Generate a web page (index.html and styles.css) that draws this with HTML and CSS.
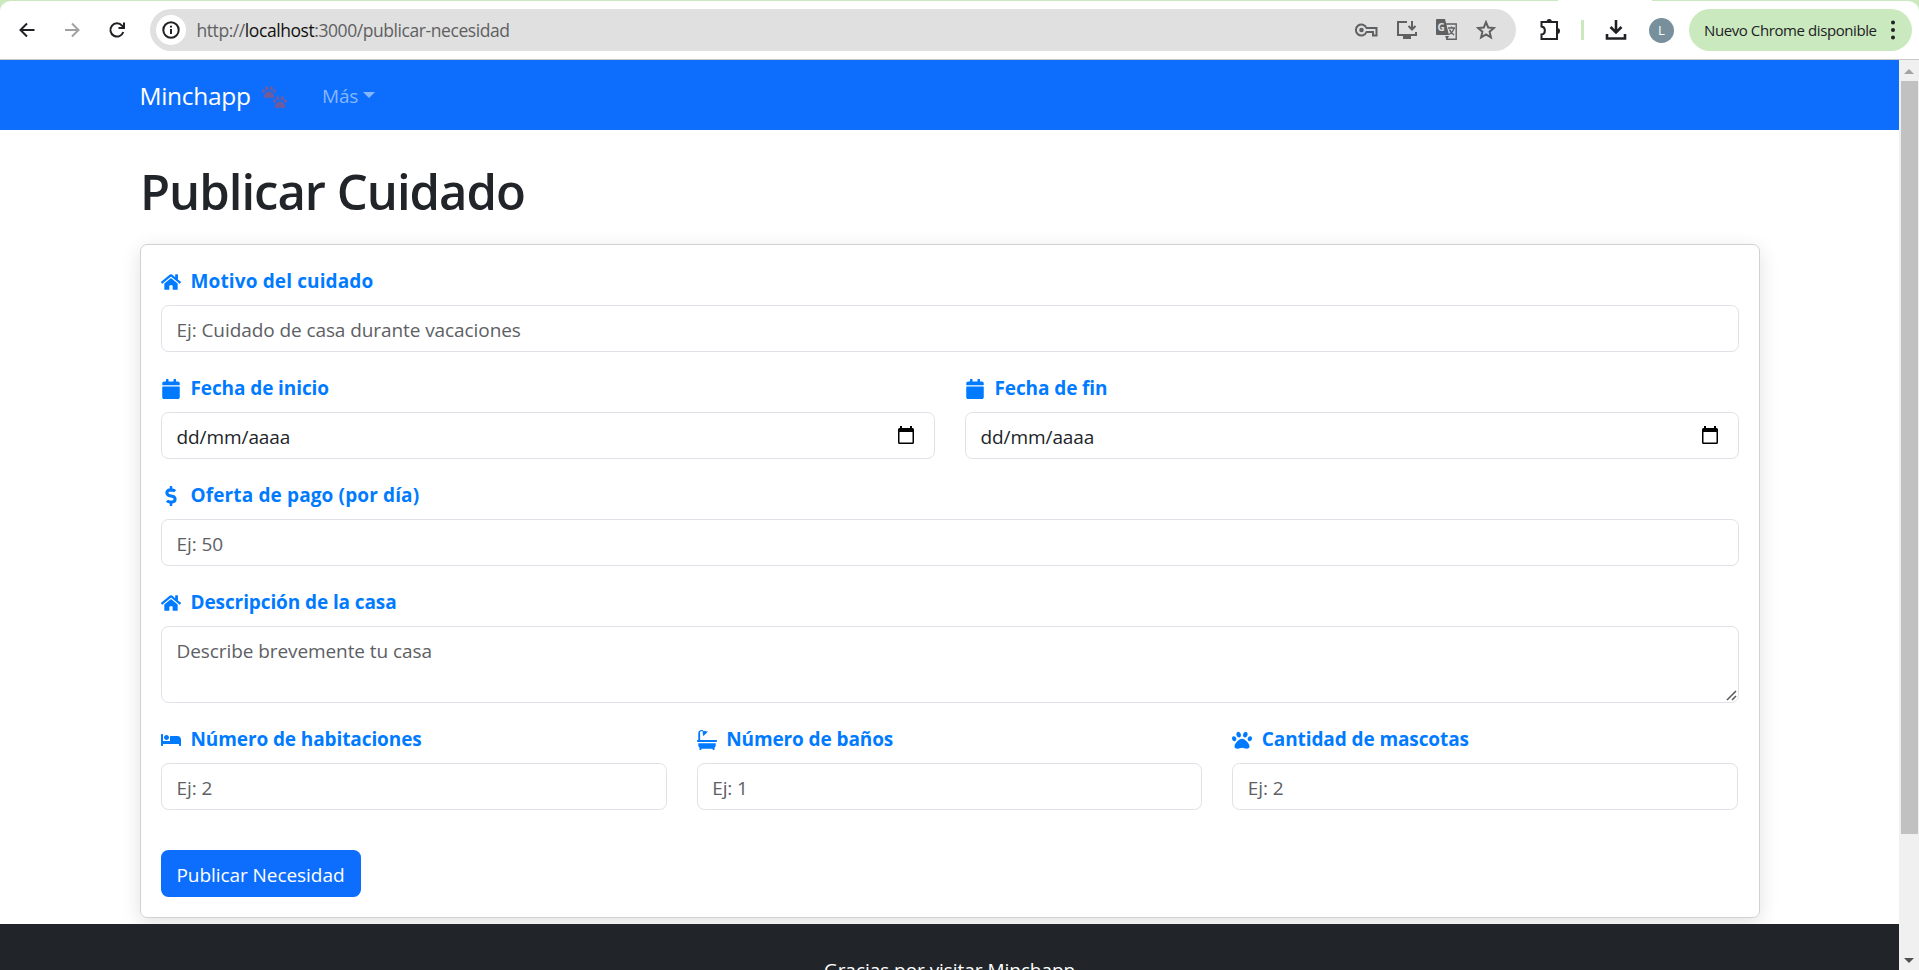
FILE: index.html
```html
<!DOCTYPE html>
<html lang="es">
<head>
<meta charset="utf-8">
<title>Publicar Cuidado - Minchapp</title>
<link rel="stylesheet" href="styles.css">
</head>
<body>
<svg class="defs" aria-hidden="true">
  <symbol id="house" viewBox="0 0 576 512"><path d="M280.37 148.26L96 300.11V464a16 16 0 0 0 16 16l112.06-.29a16 16 0 0 0 15.92-16V368a16 16 0 0 1 16-16h64a16 16 0 0 1 16 16v95.64a16 16 0 0 0 16 16.05L464 480a16 16 0 0 0 16-16V300L295.67 148.26a12.19 12.19 0 0 0-15.3 0zM571.6 251.47L488 182.56V44.05a12 12 0 0 0-12-12h-56a12 12 0 0 0-12 12v72.61L318.47 43a48 48 0 0 0-61 0L4.34 251.47a12 12 0 0 0-1.6 16.9l25.5 31A12 12 0 0 0 45.15 301l235.22-193.74a12.19 12.19 0 0 1 15.3 0L530.9 301a12 12 0 0 0 16.9-1.6l25.5-31a12 12 0 0 0-1.7-16.93z"/></symbol>
  <symbol id="calendar" viewBox="0 0 448 512"><path d="M12 192h424c6.600 0 12 5.400 12 12v260c0 26.500-21.500 48-48 48H48c-26.500 0-48-21.500-48-48V204c0-6.600 5.400-12 12-12zm436-44v-36c0-26.500-21.500-48-48-48h-48V12c0-6.600-5.400-12-12-12h-40c-6.600 0-12 5.400-12 12v52H160V12c0-6.600-5.400-12-12-12h-40c-6.600 0-12 5.400-12 12v52H48C21.500 64 0 85.500 0 112v36c0 6.600 5.400 12 12 12h424c6.600 0 12-5.400 12-12z"/></symbol>
  <symbol id="dollar" viewBox="0 0 288 512"><path d="M209.200 233.400l-108-31.600C88.700 198.200 80 186.500 80 173.500c0-16.300 13.200-29.500 29.500-29.500h66.300c12.200 0 24.200 3.700 34.200 10.500 6.100 4.100 14.300 3.100 19.500-2l34.800-34c7.100-6.900 6.100-18.400-1.800-24.500C238 74.800 207.400 64.100 176 64V16c0-8.800-7.200-16-16-16h-32c-8.800 0-16 7.200-16 16v48h-2.500C45.800 64-5.400 118.700.5 183.600c4.200 46.100 39.400 83.600 83.800 96.600l102.500 30c12.500 3.700 21.200 15.300 21.200 28.300 0 16.300-13.200 29.500-29.500 29.500h-66.300C100 368 88 364.300 78 357.500c-6.100-4.100-14.300-3.100-19.500 2l-34.800 34c-7.100 6.900-6.100 18.400 1.800 24.500 24.500 19.200 55.100 29.900 86.500 30v48c0 8.800 7.200 16 16 16h32c8.800 0 16-7.200 16-16v-48.200c46.600-.9 90.300-28.600 105.700-72.700 21.500-61.600-14.600-124.800-72.500-141.700z"/></symbol>
  <symbol id="bed" viewBox="0 0 640 512"><path d="M176 256c44.110 0 80-35.890 80-80s-35.890-80-80-80-80 35.890-80 80 35.890 80 80 80zm352-128H304c-8.840 0-16 7.160-16 16v144H64V80c0-8.840-7.160-16-16-16H16C7.160 64 0 71.160 0 80v352c0 8.840 7.160 16 16 16h32c8.840 0 16-7.160 16-16v-48h512v48c0 8.840 7.160 16 16 16h32c8.840 0 16-7.160 16-16V240c0-61.860-50.140-112-112-112z"/></symbol>
  <symbol id="bath" viewBox="0 0 512 512"><path d="M32 256V80a80 80 0 0 1 142-50c28-10 55-5 76 9l10-8 16 16-108 108-16-16 8-11c-16-24-18-52-9-76A32 32 0 0 0 80 80v176h416a16 16 0 0 1 16 16v16a16 16 0 0 1-16 16H16a16 16 0 0 1-16-16v-16a16 16 0 0 1 16-16zM32 336h448v48c0 28-12 54-32 71v41a16 16 0 0 1-16 16h-16a16 16 0 0 1-16-16v-16H112v16a16 16 0 0 1-16 16H80a16 16 0 0 1-16-16v-41a95 95 0 0 1-32-71z"/></symbol>
  <symbol id="paw" viewBox="0 0 512 512"><path d="M256 224c-79.410 0-192 122.760-192 200.250 0 34.900 26.810 55.750 71.740 55.750 48.840 0 81.090-25.080 120.260-25.080 39.510 0 71.850 25.080 120.260 25.080 44.930 0 71.740-20.850 71.740-55.750C448 346.760 335.410 224 256 224zm-147.280-12.610c-10.400-34.650-42.440-57.090-71.560-50.130-29.120 6.960-44.290 40.690-33.890 75.340 10.400 34.650 42.440 57.090 71.560 50.130 29.120-6.960 44.290-40.690 33.890-75.340zm84.720-20.780c30.940-8.140 42.930-46.420 30.060-85.490-12.860-39.070-45.750-65.050-76.690-56.900s-42.930 46.420-30.060 85.490c12.870 39.070 45.750 65.050 76.690 56.900zm281.390-29.350c-29.120-6.960-61.150 15.480-71.560 50.130-10.400 34.650 4.770 68.380 33.890 75.340 29.120 6.960 61.150-15.480 71.560-50.130 10.400-34.650-4.770-68.380-33.890-75.340zm-156.270 29.350c30.940 8.140 63.820-17.830 76.690-56.900 12.860-39.070.88-77.350-30.060-85.490s-63.820 17.830-76.690 56.900c-12.870 39.070-.88 77.350 30.060 85.490z"/></symbol>
  <symbol id="picker" viewBox="0 0 16 18"><path d="M2 0h2v2h8V0h2v2h.5A1.500 1.500 0 0 1 16 3.500v13a1.500 1.500 0 0 1-1.500 1.500h-13A1.500 1.500 0 0 1 0 16.500v-13A1.500 1.500 0 0 1 1.500 2H2zM1.500 6v10.500h13V6z"/></symbol>
</svg>

<header class="toolbar">
  <nav class="nav-buttons">
    <svg class="ic18" viewBox="0 0 18 18"><path class="ln2" d="M16.500 9H3M9 2.500 2.500 9 9 15.500"/></svg>
    <svg class="ic18 muted" viewBox="0 0 18 18"><path class="ln2" d="M2 9h13M9 2.500 15.500 9 9 15.500"/></svg>
    <svg class="ic18" viewBox="0 0 18 18"><path class="ln2" d="M15.300 11A6.600 6.600 0 1 1 14 4.600L16 7M16 1.500V7h-5.500"/></svg>
  </nav>
  <div class="address">
    <span class="info"><svg viewBox="0 0 18 18"><circle class="ln2" cx="9" cy="9" r="7.700"/><path class="ln2" d="M9 8v5M9 4.800v1.700"/></svg></span>
    <span class="url">http://<b>localhost</b>:3000/publicar-necesidad</span>
    <span class="address-icons">
      <svg width="24" height="20" viewBox="0 0 24 20"><path class="ln2" d="M12.500 8H22.500V15.500H19V12H12.500A5.500 5.500 0 1 1 12.500 8z"/><circle cx="7.500" cy="10" r="2.300"/></svg>
      <svg width="22" height="20" viewBox="0 0 22 20"><path class="ln2" d="M11 2H2v13h18v-3M16 1v8M12.500 6l3.500 3.500L19.500 6"/><path d="M7 15h8v4H7z"/></svg>
      <svg width="22" height="22" viewBox="0 0 22 22"><path class="ln1" d="M10 5h10.200v15.200H10"/><path d="M1 0h8l4 16H1a1 1 0 0 1-1-1V1a1 1 0 0 1 1-1zM9 17h4l-2 4z"/><text class="tr-g" x="1.500" y="12">G</text><path class="ln1" d="M12 9h7M15.500 7.500V9M18 9c-.5 3-2.500 5-5 6.500M13.500 10.500c1 2.500 2.500 4 4.500 5.500"/></svg>
      <svg width="20" height="20" viewBox="0 0 20 20"><path class="ln2" d="M10 2.200l2.200 5.300 5.700.5-4.300 3.700 1.300 5.600L10 14.300l-4.900 3 1.300-5.600L2.100 8l5.700-.5z"/></svg>
    </span>
  </div>
  <svg class="puzzle" viewBox="0 0 22 24"><path class="ln2" d="M2.500 4H18v17H2.500v-4.500c4.500-.5 4.500-7.500 0-8z"/><path d="M7.500 4a2.700 3 0 0 1 5.400 0zM18 10a3 3 0 0 1 0 6z"/></svg>
  <span class="divider"></span>
  <svg class="download" viewBox="0 0 22 22"><path class="ln3" d="M11 1v12M5.500 8l5.500 5.500L16.500 8M2 15v4.500h18V15"/></svg>
  <span class="avatar">L</span>
  <div class="update"><span>Nuevo Chrome disponible</span><svg width="6" height="20" viewBox="0 0 6 20"><circle cx="3" cy="2.500" r="2"/><circle cx="3" cy="10" r="2"/><circle cx="3" cy="17.500" r="2"/></svg></div>
  <span class="tab-foot"></span>
</header>

<div class="viewport">
  <div class="page">
    <nav class="navbar">
      <span class="brand">Minchapp</span>
      <span class="paws"><svg><use href="#paw"/></svg><svg><use href="#paw"/></svg></span>
      <span class="more">Más</span><span class="caret"></span>
    </nav>
    <main class="container">
      <h1>Publicar Cuidado</h1>
      <form class="card">
        <div class="field">
          <label class="wide"><svg><use href="#house"/></svg><span>Motivo del cuidado</span></label>
          <div class="control ph"><span>Ej: Cuidado de casa durante vacaciones</span></div>
        </div>
        <div class="row">
          <div class="field">
            <label><svg><use href="#calendar"/></svg><span>Fecha de inicio</span></label>
            <div class="control date"><span>dd/mm/aaaa</span><svg><use href="#picker"/></svg></div>
          </div>
          <div class="field">
            <label><svg><use href="#calendar"/></svg><span>Fecha de fin</span></label>
            <div class="control date"><span>dd/mm/aaaa</span><svg><use href="#picker"/></svg></div>
          </div>
        </div>
        <div class="field">
          <label class="wide"><svg><use href="#dollar"/></svg><span>Oferta de pago (por día)</span></label>
          <div class="control ph"><span>Ej: 50</span></div>
        </div>
        <div class="field">
          <label><svg><use href="#house"/></svg><span>Descripción de la casa</span></label>
          <div class="control ph area"><span>Describe brevemente tu casa</span><svg class="grip" viewBox="0 0 12 12"><path d="M1 11 10 2M6 11 10 7"/></svg></div>
        </div>
        <div class="row thirds">
          <div class="field">
            <label><svg><use href="#bed"/></svg><span>Número de habitaciones</span></label>
            <div class="control ph"><span>Ej: 2</span></div>
          </div>
          <div class="field">
            <label><svg><use href="#bath"/></svg><span>Número de baños</span></label>
            <div class="control ph"><span>Ej: 1</span></div>
          </div>
          <div class="field">
            <label><svg><use href="#paw"/></svg><span>Cantidad de mascotas</span></label>
            <div class="control ph"><span>Ej: 2</span></div>
          </div>
        </div>
        <button type="button" class="submit"><span>Publicar Necesidad</span></button>
      </form>
    </main>
    <footer class="footer"><span>Gracias por visitar Minchapp</span></footer>
  </div>
  <div class="scrollbar"><i class="up"></i><div class="thumb"></div><i class="down"></i></div>
</div>
</body>
</html>
```
FILE: styles.css
```css
* { box-sizing: border-box; }
body {
  margin: 0;
  width: 1919px;
  height: 970px;
  overflow: hidden;
  background: #cbe9be;
  color: #212529;
  font-family: "Open Sans", "Noto Sans", sans-serif;
  font-size: 19px;
}
svg { fill: currentColor; flex: none; display: block; }
.defs { position: absolute; width: 0; height: 0; }
.ln1, .ln2, .ln3 { fill: none; stroke: currentColor; stroke-width: 1.4; }
.ln2 { stroke-width: 2; }
.ln3 { stroke-width: 2.600; }

/* Browser toolbar */
.toolbar {
  position: relative;
  display: flex;
  align-items: center;
  height: 60px;
  border-top: 1px solid #cbe9be;
  border-bottom: 1px solid #c8c8c8;
  border-radius: 11px 11px 0 0;
  background: #fff;
  color: #202124;
}
.tab-foot { position: absolute; top: -1px; left: 1558px; width: 94px; height: 1px; background: #fff; }
.nav-buttons { display: flex; gap: 27px; padding-left: 18px; width: 150px; }
.ic18 { width: 18px; height: 18px; }
.muted { color: #a0a1a3; }
.address {
  display: flex;
  align-items: center;
  width: 1366px;
  height: 42px;
  padding: 0 20px 0 6px;
  border-radius: 21px;
  background: #e0e0e0;
  color: #5f6062;
}
.info {
  display: grid;
  place-items: center;
  width: 30px;
  height: 30px;
  border-radius: 50%;
  background: #fff;
  color: #202124;
}
.info svg { width: 18px; height: 18px; }
.url { margin-left: 10.500px; font-size: 17.500px; letter-spacing: -0.430px; }
.url b { color: #111; font-weight: 400; }
.address-icons { display: flex; align-items: center; gap: 18px; margin-left: auto; }
.tr-g { fill: #e0e0e0; font-size: 10px; font-weight: 700; }
.puzzle { width: 22px; height: 24px; margin-left: 23px; }
.divider { width: 3px; height: 20px; margin-left: 20px; background: #cbe9be; }
.download { width: 22px; height: 22px; margin-left: 21px; }
.avatar {
  width: 25px;
  height: 25px;
  margin-left: 22px;
  border-radius: 50%;
  background: #78909c;
  color: #fff;
  font-size: 13px;
  line-height: 25px;
  text-align: center;
}
.update {
  display: flex;
  align-items: center;
  justify-content: space-between;
  width: 223px;
  height: 42px;
  margin-left: 15px;
  padding: 0 16px 0 15px;
  border-radius: 21px;
  background: #cbe9be;
  font-size: 15px;
  letter-spacing: -0.410px;
  white-space: nowrap;
}

/* Page */
.viewport { display: flex; height: 910px; background: #fff; }
.page { width: 1899px; overflow: hidden; }
.navbar {
  display: flex;
  align-items: center;
  height: 70px;
  padding-left: 139.500px;
  background: #0d6efd;
  color: #fff;
}
.brand { width: 122.500px; padding-top: 1px; font-size: 24.500px; letter-spacing: -0.300px; }
.paws { display: flex; width: 27px; height: 24px; margin-top: 4px; color: #715b9b; }
.paws svg { width: 14px; height: 14px; }
.paws svg + svg { margin: 10px 0 0 -3px; }
.more { margin-left: 33px; padding-top: 1px; color: #86b7fe; letter-spacing: -0.200px; }
.caret { margin-left: 5px; border: 6px solid transparent; border-top-color: #86b7fe; border-bottom: 0; }
.container { padding: 30px 139px 0 140px; }
h1 {
  height: 60px;
  margin: 0 0 24px;
  font-size: 49px;
  font-weight: 600;
  line-height: 63px;
  letter-spacing: -1px;
}
.card {
  height: 674px;
  padding: 20px;
  border: 1px solid #d0d1d2;
  border-radius: 7px;
  box-shadow: 0 5px 20px rgba(0, 0, 0, 0.120);
}
.row { display: grid; grid-auto-flow: column; grid-auto-columns: 1fr; gap: 30px; }
.thirds { padding-right: 1px; }
.field { padding-bottom: 20px; }
label {
  display: flex;
  align-items: center;
  height: 30px;
  margin-bottom: 10px;
  color: #007bff;
  font-weight: 700;
  font-size: 19px;
  letter-spacing: -0.100px;
}
.wide { letter-spacing: 0.130px; }
label svg { width: 20px; height: 20px; margin: 4px 9.500px 0 0; }
label span { padding-top: 2px; }
.control {
  position: relative;
  display: flex;
  height: 47px;
  padding: 0 15px 0 14.500px;
  border: 1px solid #dee2e6;
  border-radius: 7.500px;
  line-height: 48px;
  letter-spacing: -0.080px;
}
.ph { color: #5d6064; }
.area { height: 77px; }
.date { justify-content: space-between; }
.date svg { width: 16px; height: 18px; margin: 13px 5px 0 0; color: #000; }
.grip { position: absolute; right: 0; bottom: 1px; width: 12px; height: 12px; stroke: #555; stroke-width: 1.500; }
.submit {
  display: block;
  width: 200px;
  height: 47px;
  margin-top: 20px;
  padding: 1px 0 0 15.500px;
  border: 0;
  border-radius: 7.500px;
  background: #0d6efd;
  color: #fff;
  font: inherit;
  line-height: 48px;
  letter-spacing: -0.060px;
  text-align: left;
}
.footer {
  position: relative;
  height: 110px;
  margin-top: 6px;
  padding-top: 31px;
  background: #212529;
  color: #fff;
  line-height: 30px;
  letter-spacing: -0.050px;
  text-align: center;
}
.scrollbar {
  display: flex;
  flex-direction: column;
  align-items: center;
  width: 20px;
  background: #f0f0f0;
}
.thumb { width: 17px; height: 753px; margin-top: 7px; background: #c1c1c1; }
.up, .down { border: 5px solid transparent; }
.up { margin-top: 9px; border-top: 0; border-bottom-color: #a3a3a3; }
.down { margin: auto 0 7px; border-bottom: 0; border-top-color: #505050; }
```
